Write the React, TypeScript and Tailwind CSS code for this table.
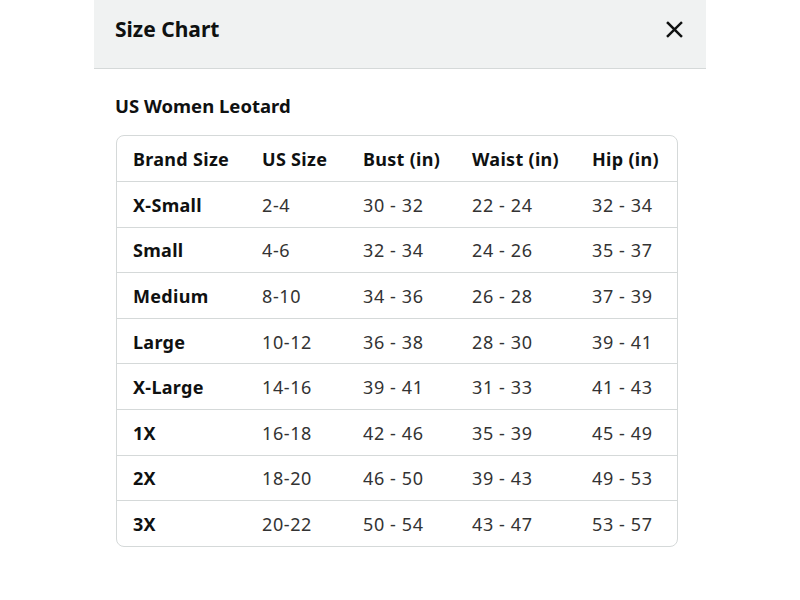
import React from "react";

const headers = ["Brand Size", "US Size", "Bust (in)", "Waist (in)", "Hip (in)"];

const rows = [
  ["X-Small", "2-4", "30 - 32", "22 - 24", "32 - 34"],
  ["Small", "4-6", "32 - 34", "24 - 26", "35 - 37"],
  ["Medium", "8-10", "34 - 36", "26 - 28", "37 - 39"],
  ["Large", "10-12", "36 - 38", "28 - 30", "39 - 41"],
  ["X-Large", "14-16", "39 - 41", "31 - 33", "41 - 43"],
  ["1X", "16-18", "42 - 46", "35 - 39", "45 - 49"],
  ["2X", "18-20", "46 - 50", "39 - 43", "49 - 53"],
  ["3X", "20-22", "50 - 54", "43 - 47", "53 - 57"],
];

const grid = "grid grid-cols-[129px_101px_109px_120px_1fr] items-center";

export default function App() {
  return (
    <div className="w-[800px] h-[600px] bg-white" style={{ fontFamily: '"Noto Sans", Arial, sans-serif' }}>
      <div className="mx-auto w-[612px]">
        {/* Header */}
        <div className="h-[69px] bg-[#f0f2f2] border-b border-[#d5d9d9] flex items-center justify-between pl-[21px] pr-[23px]">
          <h1 className="text-[21px] font-bold text-[#0f1111] -mt-[9px]">Size Chart</h1>
          <button className="text-[#0f1111] -mt-[9px]">
            <svg width="17" height="17" viewBox="0 0 18 18" fill="none" stroke="currentColor" strokeWidth="2.6" strokeLinecap="square">
              <path d="M2 2 L16 16 M16 2 L2 16" />
            </svg>
          </button>
        </div>

        {/* Body */}
        <div className="pl-[21px] pr-[28px] pt-[23px]">
          <h2 className="text-[18.5px] font-bold text-[#0f1111] leading-[28px]">US Women Leotard</h2>
          <div className="ml-px mt-[15px] border border-[#d5d9d9] rounded-[8px] overflow-hidden text-[18px] text-[#0f1111]">
            <div className={`${grid} h-[45px] pt-[2px]`}>
              {headers.map((h) => (
                <div key={h} className="pl-[16px] font-bold tracking-[0.3px]">
                  {h}
                </div>
              ))}
            </div>
            {rows.map((r) => (
              <div key={r[0]} className={`${grid} h-[45.6px] border-t border-[#d5d9d9] pt-[2px]`}>
                {r.map((c, i) => (
                  <div
                    key={i}
                    className={`pl-[16px] ${i === 0 ? "font-bold tracking-[0.3px]" : "text-[#333] tracking-[0.6px]"}`}
                  >
                    {c}
                  </div>
                ))}
              </div>
            ))}
          </div>
        </div>
      </div>
    </div>
  );
}
